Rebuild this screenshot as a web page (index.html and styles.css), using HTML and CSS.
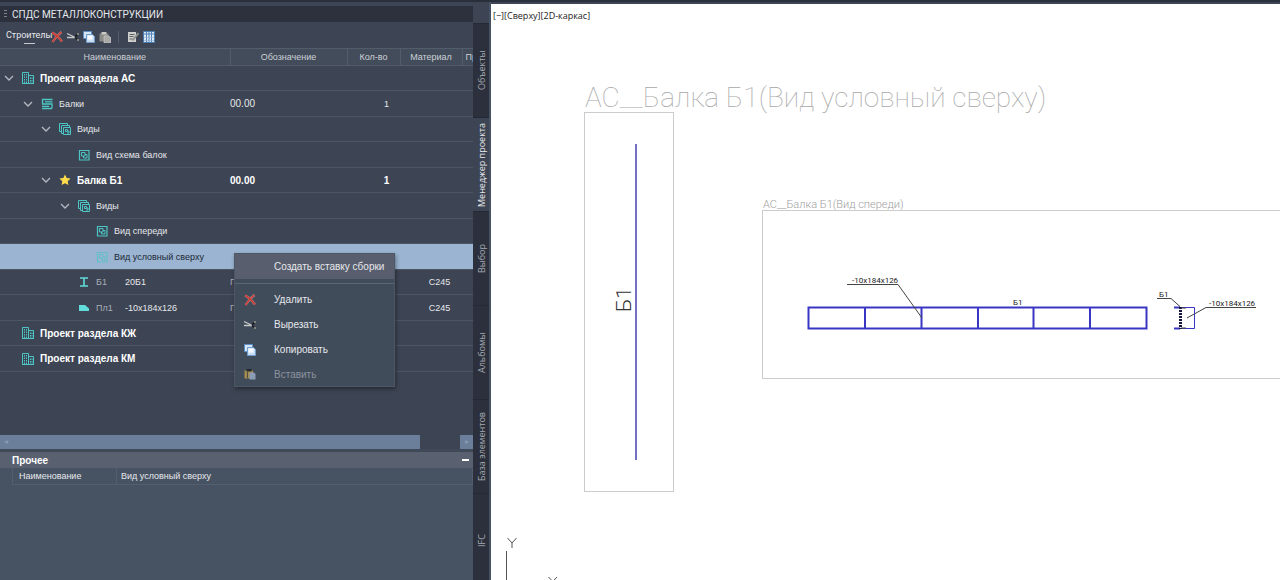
FILE: index.html
```
<!DOCTYPE html>
<html lang="ru">
<head>
  <meta charset="UTF-8" />
  <meta name="viewport" content="width=device-width, initial-scale=1.0"/>
  <title>СПДС Металлоконструкции</title>
  <link rel="stylesheet" href="styles.css">
</head>
<body>

<!-- icon set -->
<svg class="sprite" aria-hidden="true">
  <symbol id="i-chevron" viewBox="0 0 10 10"><path d="M1 3l4 4 4-4" fill="none" stroke="#b4bac4" stroke-width="1.3"/></symbol>
  <symbol id="i-project" viewBox="0 0 12 12">
    <path d="M.5 11.500V.5h6v11M6.500 3.500h5v8M0 11.500h12" fill="none" stroke="#4cc5c4"/>
    <path d="M2.500 2v9M4.500 2v9M8.500 5.500v5.500M10 5.500v5.500" stroke="#4cc5c4" stroke-dasharray="1.500 1"/>
  </symbol>
  <symbol id="i-beams" viewBox="0 0 12 12">
    <path d="M1 1.500h10.500M11 10.500H1M1.500 1.500v4.500h9.500v4.500M4 3.800h7.500M1 8.300h7" fill="none" stroke="#4cc5c4" stroke-width="1.300"/>
  </symbol>
  <symbol id="i-views" viewBox="0 0 12 12">
    <path d="M2.500 8.500h-2v-8h8v2M4.500 10.500h-2v-8h8v2" fill="none" stroke="#4cc5c4"/>
    <path d="M4.500 4.500h7v7h-7zM6.500 6.500h2v2h-2zM8.500 8h1.500v2H8" fill="none" stroke="#4cc5c4"/>
  </symbol>
  <symbol id="i-view" viewBox="0 0 12 12">
    <path d="M1.500 1.500h9.500v9.500H1.500z" fill="none" stroke="#4cc5c4" stroke-width="1.200"/>
    <path d="M3.500 3.500h3.500v3.500H3.500zM7 5.500h2v3.500H5.500V7" fill="none" stroke="#4cc5c4"/>
  </symbol>
  <symbol id="i-star" viewBox="0 0 12 12"><path d="M6 .5l1.700 3.500 3.900.5-2.900 2.700.7 3.900L6 9.300l-3.400 1.800.7-3.900L.4 4.500l3.900-.5z" fill="#ffdc4a"/></symbol>
  <symbol id="i-profile" viewBox="0 0 12 12"><path d="M2 2h8M2 10h8M6 2v8" fill="none" stroke="#62dcda" stroke-width="1.600"/></symbol>
  <symbol id="i-plate" viewBox="0 0 12 12"><path d="M1 3h6l4 3.500V9H1z" fill="#62dcda"/></symbol>
  <symbol id="i-delete" viewBox="0 0 12 12">
    <path d="M1 1.500c4 2 7 5 10 9M10.500 1C7 3.500 4 7 1.500 11" fill="none" stroke="#b98f90" stroke-width="2.300"/>
    <path d="M1 1.500c4 2 7 5 10 9M10.500 1C7 3.500 4 7 1.500 11" fill="none" stroke="#cc3a34" stroke-width="1.500"/>
  </symbol>
  <symbol id="i-cut" viewBox="0 0 12 12">
    <path d="M0 2.500l8.500 4M0 6.500h8.500" fill="none" stroke="#c4c6c8" stroke-width="1.300"/>
    <path d="M8 6l2.500-2.500M8 6.500l2.500 2" stroke="#17191d" stroke-width="1.600"/>
    <circle cx="11" cy="3" r="1" fill="#9c988b"/><circle cx="11" cy="9" r="1" fill="#9c988b"/>
  </symbol>
  <symbol id="i-copy" viewBox="0 0 12 12">
    <path d="M.5.5h8v7h-8z" fill="#d4e5f5" stroke="#5d8fc4"/>
    <path d="M3.500 3.500h6l2 2v6h-8z" fill="#c9def2" stroke="#6f9dcc"/>
    <path d="M4.500 4.500h5v4h-5z" fill="#f6fbff"/>
  </symbol>
  <symbol id="i-paste-off" viewBox="0 0 12 12">
    <path d="M.5 2.500h9v8h-9z" fill="#8a8a86"/><path d="M2.500 1h5v2.500h-5z" fill="#c9c9c6"/>
    <path d="M5 5h5l2 2v5H5z" fill="#a9a9a8" stroke="#d2d2d0" stroke-width=".6"/>
  </symbol>
  <symbol id="i-paste" viewBox="0 0 12 12">
    <path d="M.5 2.500h8.500v8H.5z" fill="#a58d51"/><path d="M2.500 1h5v2.500h-5z" fill="#25282e"/>
    <path d="M5.500 4.500H10l1.500 1.500v5.500h-6z" fill="#8b9db6"/><path d="M3.500 4v6" stroke="#4d4b44"/>
  </symbol>
  <symbol id="i-edit" viewBox="0 0 12 12">
    <path d="M1 1h8v10H1z" fill="#cfd0cd"/><path d="M2.500 3.500h5M2.500 5.500h4M2.500 8h3" stroke="#5a5e63"/>
    <path d="M5.500 9.500L11.500 2" stroke="#8d908d" stroke-width="2"/>
  </symbol>
  <symbol id="i-table" viewBox="0 0 12 12">
    <path d="M.5.5h11v11H.5z" fill="#dce8f4" stroke="#4c7db2"/>
    <path d="M1 3h10M3.500 1v10M6 1v10M8.500 1v10" stroke="#4f82b8"/>
    <path d="M1 6.500h10M1 9.500h10" stroke="#8fb0d2" stroke-width=".6"/>
  </symbol>
</svg>

<div class="app">
  <aside class="panel">
    <header class="panel-title"><span class="grip"></span>СПДС МЕТАЛЛОКОНСТРУКЦИИ</header>

    <div class="toolbar">
      <button class="mode">Строителы</button>
      <button class="tool" aria-label="Удалить"><svg><use href="#i-delete"/></svg></button>
      <button class="tool" aria-label="Вырезать"><svg><use href="#i-cut"/></svg></button>
      <button class="tool" aria-label="Копировать"><svg><use href="#i-copy"/></svg></button>
      <button class="tool" aria-label="Вставить"><svg><use href="#i-paste-off"/></svg></button>
      <span class="divider"></span>
      <button class="tool" aria-label="Редактировать"><svg><use href="#i-edit"/></svg></button>
      <button class="tool" aria-label="Таблица"><svg><use href="#i-table"/></svg></button>
    </div>

    <div class="tree-area">
      <table class="tree">
        <colgroup><col class="c-name"><col class="c-code"><col class="c-qty"><col class="c-mat"><col></colgroup>
        <thead>
          <tr><th>Наименование</th><th>Обозначение</th><th>Кол-во</th><th>Материал</th><th class="cut">Пр</th></tr>
        </thead>
        <tbody>
          <tr class="bold">
            <td><div class="node"><button class="toggle" aria-label="Свернуть"><svg><use href="#i-chevron"/></svg></button><svg class="icon"><use href="#i-project"/></svg>Проект раздела АС</div></td>
            <td></td><td></td><td></td><td></td>
          </tr>
          <tr>
            <td><div class="node level-1"><button class="toggle" aria-label="Свернуть"><svg><use href="#i-chevron"/></svg></button><svg class="icon"><use href="#i-beams"/></svg>Балки</div></td>
            <td class="code">00.00</td><td>1</td><td></td><td></td>
          </tr>
          <tr>
            <td><div class="node level-2"><button class="toggle" aria-label="Свернуть"><svg><use href="#i-chevron"/></svg></button><svg class="icon"><use href="#i-views"/></svg>Виды</div></td>
            <td></td><td></td><td></td><td></td>
          </tr>
          <tr>
            <td><div class="node level-3"><span class="toggle"></span><svg class="icon"><use href="#i-view"/></svg>Вид схема балок</div></td>
            <td></td><td></td><td></td><td></td>
          </tr>
          <tr class="bold">
            <td><div class="node level-2"><button class="toggle" aria-label="Свернуть"><svg><use href="#i-chevron"/></svg></button><svg class="icon"><use href="#i-star"/></svg>Балка Б1</div></td>
            <td class="code">00.00</td><td>1</td><td></td><td></td>
          </tr>
          <tr>
            <td><div class="node level-3"><button class="toggle" aria-label="Свернуть"><svg><use href="#i-chevron"/></svg></button><svg class="icon"><use href="#i-views"/></svg>Виды</div></td>
            <td></td><td></td><td></td><td></td>
          </tr>
          <tr>
            <td><div class="node level-4"><span class="toggle"></span><svg class="icon"><use href="#i-view"/></svg>Вид спереди</div></td>
            <td></td><td></td><td></td><td></td>
          </tr>
          <tr class="selected">
            <td><div class="node level-4"><span class="toggle"></span><svg class="icon"><use href="#i-view"/></svg>Вид условный сверху</div></td>
            <td></td><td></td><td></td><td></td>
          </tr>
          <tr>
            <td><div class="node level-3"><span class="toggle"></span><svg class="icon"><use href="#i-profile"/></svg><span class="mark">Б1</span>20Б1</div></td>
            <td class="dim">Г</td><td></td><td>С245</td><td></td>
          </tr>
          <tr>
            <td><div class="node level-3"><span class="toggle"></span><svg class="icon"><use href="#i-plate"/></svg><span class="mark">Пл1</span>-10x184x126</div></td>
            <td class="dim">Г</td><td></td><td>С245</td><td></td>
          </tr>
          <tr class="bold">
            <td><div class="node"><span class="toggle"></span><svg class="icon"><use href="#i-project"/></svg>Проект раздела КЖ</div></td>
            <td></td><td></td><td></td><td></td>
          </tr>
          <tr class="bold">
            <td><div class="node"><span class="toggle"></span><svg class="icon"><use href="#i-project"/></svg>Проект раздела КМ</div></td>
            <td></td><td></td><td></td><td></td>
          </tr>
        </tbody>
      </table>

      <div class="menu">
        <button class="menu-item active">Создать вставку сборки</button>
        <hr>
        <button class="menu-item"><svg><use href="#i-delete"/></svg>Удалить</button>
        <button class="menu-item"><svg><use href="#i-cut"/></svg>Вырезать</button>
        <button class="menu-item"><svg><use href="#i-copy"/></svg>Копировать</button>
        <button class="menu-item" disabled><svg><use href="#i-paste"/></svg>Вставить</button>
      </div>
    </div>

    <div class="scrollbar"><span class="thumb">◂</span><span class="arrow">▸</span></div>

    <section class="props">
      <div class="props-head">Прочее<button class="collapse" aria-label="Свернуть"></button></div>
      <table class="props-table">
        <tr><th>Наименование</th><td>Вид условный сверху</td></tr>
      </table>
    </section>
  </aside>

  <nav class="tabs">
    <button class="tab">Объекты</button>
    <button class="tab current">Менеджер проекта</button>
    <button class="tab">Выбор</button>
    <button class="tab">Альбомы</button>
    <button class="tab">База элементов</button>
    <button class="tab">IFC</button>
  </nav>

  <main class="canvas">
    <svg class="drawing" viewBox="0 0 789 576" preserveAspectRatio="xMinYMin slice">
      <text class="viewport" x="2" y="15">[−][Сверху][2D-каркас]</text>

      <!-- top view -->
      <text class="title-large" x="94" y="103">АС__Балка Б1(Вид условный сверху)</text>
      <rect class="frame" x="93.5" y="108.5" width="89" height="379"/>
      <path class="axis" d="M145 140v316"/>
      <text class="mark-large" transform="translate(140 308) rotate(-90)">Б1</text>

      <!-- front view -->
      <text class="title-small" x="272" y="204">АС__Балка Б1(Вид спереди)</text>
      <rect class="frame" x="271.5" y="206.5" width="540" height="168"/>
      <path class="beam" d="M317.500 303.500h338v21h-338zM374 303v21M430.500 303v21M487 303v21M542.500 303v21M599 303v21"/>
      <path class="leader" d="M356 280.500h51L431 314"/>
      <text class="note" x="361" y="279">-10x184x126</text>
      <text class="note" x="522" y="301">Б1</text>

      <!-- section -->
      <path class="plate" d="M689 303.500h14.500v21H689"/>
      <path class="beam" d="M683 303.500h6M683 324.500h6"/>
      <path class="web" d="M689.500 303v22"/>
      <path class="leader" d="M690 304h5M690 324h5"/>
      <path class="leader" d="M666 294.500h14l9 8M696 314l19-10.500h50"/>
      <text class="note" x="668" y="293">Б1</text>
      <text class="note" x="718" y="302">-10x184x126</text>

      <!-- UCS -->
      <path class="ucs" d="M15.500 547v29M16.500 534l4.500 5 4.500-5M21 539v5M57.500 573l8.500 9M66 573l-8.500 9"/>
    </svg>
  </main>
</div>

</body>
</html>
```
FILE: styles.css
```
* {
  box-sizing: border-box;
}

body, html {
  margin: 0;
  padding: 0;
  height: 100vh;
  overflow: hidden;
  font-family: "Liberation Sans", Arial, sans-serif;
  font-size: 10px;
  color: #e6e8ec;
}

button {
  padding: 0;
  border: none;
  background: none;
  font: inherit;
  color: inherit;
  cursor: pointer;
}

.sprite {
  display: none;
}

.app {
  display: flex;
  height: 100%;
  background-color: #3d4453;
  border-top: 2px solid #2a303b;
}

.panel {
  flex: 0 0 473px;
  display: flex;
  flex-direction: column;
  padding-top: 4px;
  min-width: 0;
}

.panel-title {
  display: flex;
  align-items: center;
  gap: 5px;
  height: 16px;
  padding-left: 4px;
  background-color: #2c313d;
  font-family: Roboto, "Noto Sans", sans-serif;
}

.grip {
  width: 3px;
  height: 8px;
  background: repeating-linear-gradient(#7c828d 0 1px, transparent 1px 3px);
}

.toolbar {
  display: flex;
  align-items: center;
  gap: 4px;
  height: 26px;
  padding: 4px 6px 0;
}

.mode {
  height: 18px;
  margin-bottom: 4px;
  width: 41px;
  font-family: Roboto, "Noto Sans", sans-serif;
  font-size: 9px;
  white-space: nowrap;
  background: linear-gradient(#c5c9d0, #c5c9d0) 18px 17px / 11px 1px no-repeat;
}

.tool, .tool svg {
  display: block;
  width: 12px;
  height: 12px;
}

.divider {
  width: 1px;
  height: 12px;
  margin: 0 4px 0 3px;
  background-color: #565e6c;
}

.tree-area {
  position: relative;
  flex: 0 0 387px;
}

.tree {
  width: 100%;
  table-layout: fixed;
  border-collapse: collapse;
}

.c-name { width: 230px; }
.c-code { width: 117px; }
.c-qty { width: 53px; }
.c-mat { width: 62px; }

.tree th {
  height: 17px;
  padding: 0;
  background-color: #434c5a;
  border: 1px solid #525c6a;
  border-left: none;
  font-size: 9px;
  font-weight: normal;
  color: #ccd0d7;
  overflow: hidden;
}

.tree th.cut {
  padding-left: 3px;
  border-right: none;
  text-align: left;
}

.tree td {
  height: 25px;
  padding: 0;
  border-bottom: 1px solid #4c5664;
  font-size: 9px;
  white-space: nowrap;
}

.tree tr:nth-child(even) td {
  height: 26px;
}

.tree .bold td, .tree .code {
  font-size: 10px;
}

.tree td:nth-child(3) {
  padding-left: 26px;
  text-align: center;
}

.tree td:nth-child(4) {
  padding-left: 17px;
  text-align: center;
}

.bold {
  font-weight: bold;
  color: #ffffff;
}

.selected {
  background-color: #9ab4d1;
  color: #1c2735;
}

.tree .dim, .mark {
  color: #a9adb8;
}

.mark {
  width: 29px;
}

.node {
  display: flex;
  align-items: center;
  padding-left: 4px;
}

.level-1 { padding-left: 23px; }
.level-2 { padding-left: 41px; }
.level-3 { padding-left: 60px; }
.level-4 { padding-left: 78px; }

.toggle, .toggle svg {
  display: block;
  flex: none;
  width: 10px;
  height: 10px;
}

.icon {
  flex: none;
  width: 12px;
  height: 12px;
  margin: 0 6px 0 8px;
}

.selected .icon {
  opacity: 0.7;
}

.menu {
  position: absolute;
  left: 234px;
  top: 205px;
  width: 161px;
  background-color: #414c5b;
  border: 1px solid #4d5765;
  box-shadow: 1px 2px 4px rgba(0, 0, 0, 0.4);
}

.menu-item {
  display: flex;
  align-items: center;
  width: 100%;
  height: 25px;
  padding-left: 9px;
  white-space: nowrap;
}

.menu-item svg {
  width: 12px;
  height: 12px;
  margin-right: 18px;
}

.menu-item.active {
  padding-left: 39px;
  background-color: #585e6d;
}

.menu-item:disabled {
  height: 24px;
  color: #8b929d;
}

.menu hr {
  margin: 4px 0 3px;
  border: none;
  border-top: 1px solid #5c6674;
}

.scrollbar {
  display: flex;
  justify-content: space-between;
  height: 14px;
  font-size: 8px;
  line-height: 13px;
  color: #8799b1;
}

.thumb {
  width: 420px;
  padding-left: 4px;
  background-color: #6c7f9a;
}

.arrow {
  width: 13px;
  text-align: center;
  background-color: #6c7f9a;
}

.props {
  flex: 1;
  background-color: #475363;
  border-top: 3px solid #404958;
}

.props-head {
  display: flex;
  align-items: center;
  justify-content: space-between;
  height: 16px;
  padding: 0 4px 0 12px;
  background-color: #596171;
  font-weight: bold;
  color: #ffffff;
}

.collapse {
  width: 7px;
  height: 2px;
  background-color: #ffffff;
}

.props-table {
  width: calc(100% - 12px);
  margin-left: 12px;
  border-collapse: collapse;
}

.props-table th, .props-table td {
  height: 16px;
  padding: 0 0 0 4px;
  border: 1px solid #525e6d;
  border-top: none;
  text-align: left;
  font-size: 9px;
  font-weight: normal;
}

.props-table th {
  width: 104px;
  padding-left: 6px;
}

.tabs {
  flex: 0 0 18px;
  display: flex;
  flex-direction: column;
  padding-top: 21px;
  border-right: 2px solid #465162;
  overflow: hidden;
}

.tab {
  flex: 0 0 94px;
  width: 16px;
  background-color: #2c303c;
  border-bottom: 1px solid #252934;
  writing-mode: vertical-rl;
  transform: rotate(180deg);
  font-family: "Open Sans", "Noto Sans", sans-serif;
  font-size: 9px;
  color: #a7abb4;
  white-space: nowrap;
}

.tab.current {
  background-color: #3d4453;
  color: #e6e8ec;
}

.canvas {
  flex: 1;
  margin-top: 2px;
  min-width: 0;
  background-color: #ffffff;
  overflow: hidden;
}

.drawing {
  display: block;
  width: 100%;
  height: 100%;
  font-family: Roboto, "Open Sans", sans-serif;
  font-weight: 300;
}

.drawing path, .drawing rect {
  fill: none;
}

.viewport {
  font-family: "Open Sans", "Noto Sans", sans-serif;
  font-size: 9px;
  font-weight: normal;
  fill: #222222;
}

.title-large {
  font-size: 28px;
  font-weight: 100;
  fill: #a8a8a8;
}

.title-small {
  font-size: 11px;
  fill: #a0a0a0;
}

.mark-large {
  font-size: 21px;
  fill: #333333;
}

.note {
  font-size: 8px;
  font-weight: normal;
  fill: #222222;
}

.frame {
  stroke: #cccccc;
}

.axis {
  stroke: #7470c4;
  stroke-width: 2;
}

.beam {
  stroke: #3a36c4;
  stroke-width: 2;
}

.plate {
  stroke: #3a36c4;
}

.web {
  stroke: #16163a;
  stroke-width: 3;
  stroke-dasharray: 2 1;
}

.leader {
  stroke: #444444;
}

.ucs {
  stroke: #555555;
}
```
